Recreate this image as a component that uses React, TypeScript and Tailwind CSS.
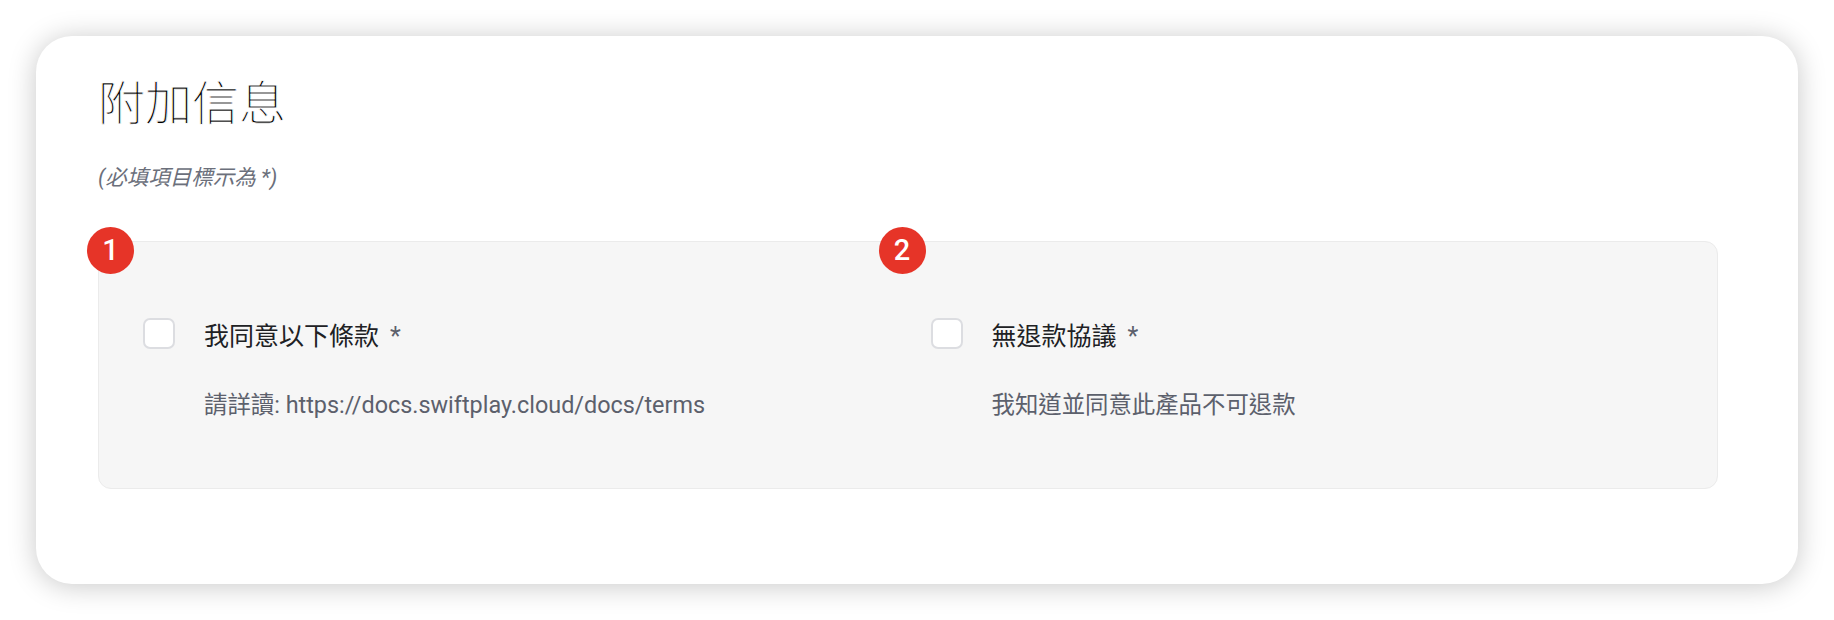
import React from "react";

const FONT = { fontFamily: 'Roboto, "Noto Sans CJK TC", "Noto Sans", sans-serif' };

function Badge({ n, className }: { n: string; className: string }) {
  return (
    <div
      className={
        "absolute flex h-[47px] w-[47px] items-center justify-center rounded-full bg-[#e63428] text-[29px] font-medium leading-none text-white " +
        className
      }
    >
      {n}
    </div>
  );
}

function Item({
  badge,
  badgeClass,
  label,
  desc,
}: {
  badge: string;
  badgeClass: string;
  label: string;
  desc: string;
}) {
  return (
    <div className="relative">
      <Badge n={badge} className={badgeClass} />
      <div className="flex items-start gap-[29px]">
        <div className="h-[31px] w-[32px] shrink-0 rounded-[7px] border-[2.5px] border-[#dcdde1] bg-white" />
        <div className="mt-[3px] text-[25px] leading-[32px] text-[#202124]">
          {label}
          <span className="ml-[11px] text-[#5c606c]">*</span>
        </div>
      </div>
      <div className="mt-[37px] pl-[61px] text-[23.4px] leading-[30px] text-[#5c606c]">{desc}</div>
    </div>
  );
}

export default function App() {
  return (
    <div className="min-h-[620px] w-full bg-white p-[36px]" style={FONT}>
      <div className="rounded-[36px] bg-white pb-[95px] pl-[62px] pr-[80px] pt-[45px] shadow-[0_2px_28px_rgba(0,0,0,0.22)]">
        <h1 className="h-[46px] text-[47px] font-light leading-[46px] text-[#000000] [-webkit-text-stroke:0.8px_#ffffff]">
          附加信息
        </h1>
        <p className="mt-[40px] text-[21.5px] italic leading-none text-[#6b6f7b]">(必填項目標示為 *)</p>
        <div className="mt-[52px] grid grid-cols-2 gap-[47px] rounded-[13px] border border-[#ebebeb] bg-[#f6f6f6] pb-[68px] pl-[44px] pr-[46px] pt-[76px]">
          <Item
            badge="1"
            badgeClass="left-[-56px] top-[-91px]"
            label="我同意以下條款"
            desc="請詳讀: https://docs.swiftplay.cloud/docs/terms"
          />
          <Item
            badge="2"
            badgeClass="left-[-52px] top-[-91px]"
            label="無退款協議"
            desc="我知道並同意此產品不可退款"
          />
        </div>
      </div>
    </div>
  );
}
